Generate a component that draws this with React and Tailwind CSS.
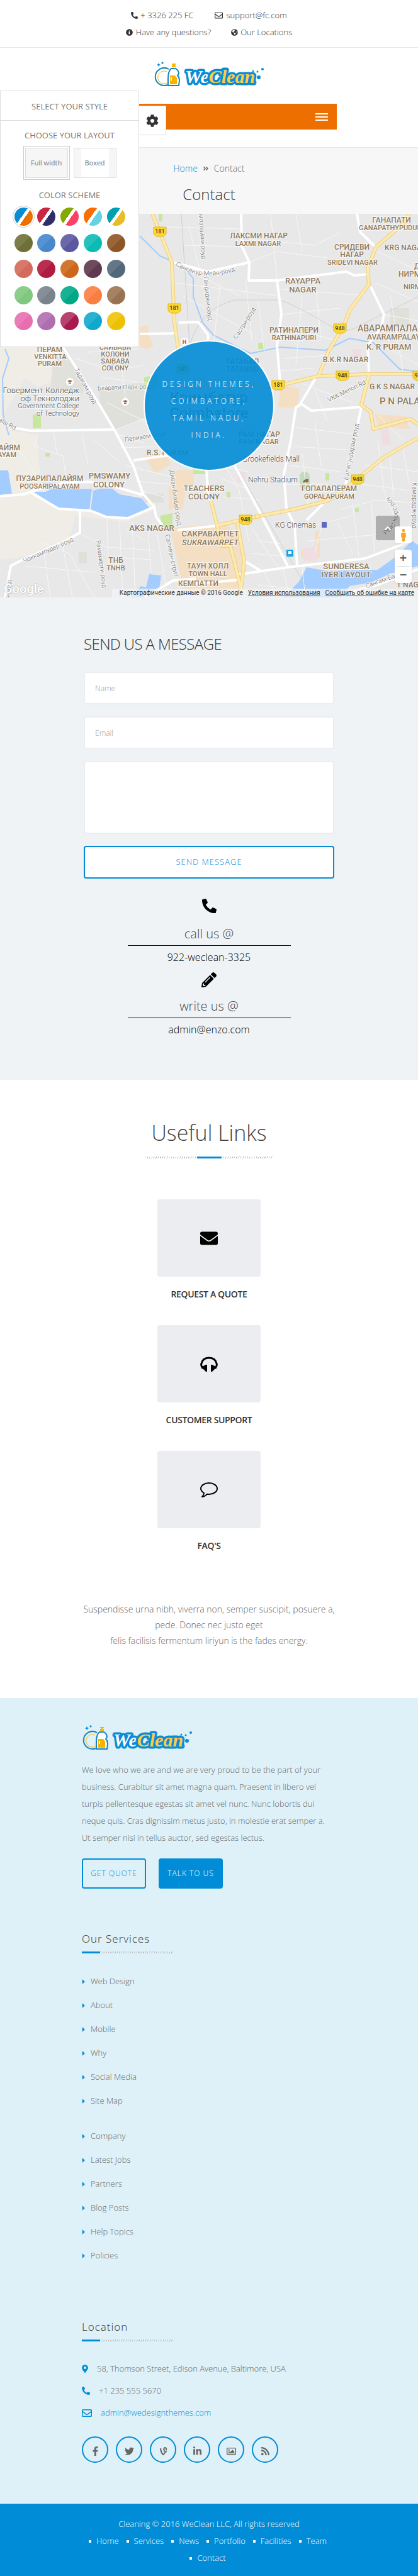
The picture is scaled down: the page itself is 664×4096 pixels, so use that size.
import React, { useState } from 'react';
import {
  FaPhone, FaEnvelope, FaCog, FaPencilAlt, FaGlobeAmericas, FaInfoCircle, FaMale,
  FaMapMarkerAlt, FaFacebookF, FaTwitter, FaVine, FaLinkedinIn, FaRegImage, FaRss,
  FaRegEnvelope, FaCaretRight, FaAngleDoubleRight, FaChevronUp,
} from 'react-icons/fa';

const SCHEMES = [
  ['#0a8cd6', '#ec6f00'], ['#cb2742', '#302e66'], ['#86a800', '#fd4166'], ['#fb6d00', '#68d2e4'], ['#00a0b0', '#eabb28'],
  ['#7d7d49', '#6f7038'], ['#5594d2', '#4888ca'], ['#6a67ab', '#5b58a1'], ['#25c2bd', '#0dbbb5'], ['#9a6637', '#8d5626'],
  ['#d9776a', '#d46a5c'], ['#b92e50', '#b01b41'], ['#d17730', '#cb661b'], ['#6e4a5e', '#603a50'], ['#637788', '#526879'],
  ['#8dcd8c', '#80c77f'], ['#868f97', '#79838b'], ['#19b193', '#00a886'], ['#fb8b52', '#f97e41'], ['#a48262', '#997351'],
  ['#e97db7', '#e76fb0'], ['#b87db9', '#af6eb0'], ['#b84371', '#a8194f'], ['#27b2d2', '#10a9cd'], ['#f1c91c', '#edc102'],
];

// x, y, text, size, anchor
const AREAS = [
  [411, 35, 'ЛАКСМИ НАГАР', 12], [410, 47, 'LAXMI NAGAR', 11],
  [622, 10, 'ГАНАПАТИ', 12], [570, 22, 'GANAPATHYPUDUR', 11, 'start'],
  [559, 53, 'СРИДЕВИ', 12], [559, 65, 'НАГАР', 12], [560, 77, 'SRIDEVI NAGAR', 11],
  [611, 54, 'KRG NAGAR', 12, 'start'], [481, 106, 'RAYAPPA', 13], [481, 120, 'NAGAR', 13],
  [658, 83, 'ДИВЯ', 12, 'start'], [633, 96, 'НИРМАЛ', 12, 'start'], [641, 116, 'NIRMAL', 11, 'start'],
  [467, 185, 'РАТИНАПЕРИ', 12], [467, 197, 'RATHINAPURI', 11],
  [568, 182, 'АВАРАМПАЛАЯМ', 14, 'start'], [583, 196, 'AVARAMPALAYAM', 12, 'start'],
  [582, 211, 'K. R PURAM', 13, 'start'], [549, 232, 'B.K.R NAGAR', 12], [623, 275, 'G K S NAGAR', 12],
  [603, 298, 'P N PALAYAM', 15, 'start'], [385, 235, 'ТАТАБАД', 12], [385, 247, 'TATABAD', 12],
  [332, 292, 'Коимбатур', 24], [332, 317, 'Coimbatore', 24],
  [79, 216, 'ПЕРАМ', 12], [80, 227, 'VENKITTA', 11], [79, 238, 'PURAM', 11],
  [183, 212, 'САИБАБА', 11], [183, 223, 'КОЛОНИ', 11], [183, 234, 'SAIBABA', 11], [183, 245, 'COLONY', 11],
  [32, 372, 'ПАЛАЙЯМ', 12, 'end'], [26, 383, 'PALAYAM', 11, 'end'],
  [266, 380, 'R.S. PURAM', 12], [412, 351, 'РАМ НАГАР', 12], [411, 362, 'RAM NAGAR', 11],
  [523, 437, 'ГОПАЛАПЕРАМ', 12], [523, 449, 'GOPALAPURAM', 11],
  [79, 421, 'ПУЗАРИПАЛАЙЯМ', 12], [79, 433, 'POOSARIPALAYAM', 11],
  [174, 416, 'PMSWAMY', 13], [173, 430, 'COLONY', 13],
  [324, 436, 'TEACHERS', 13], [324, 449, 'COLONY', 13], [241, 499, 'AKS NAGAR', 13],
  [334, 508, 'САКРАВАРПЕТ', 13], [184, 551, 'ТНБ', 12], [184, 563, 'TNHB', 11],
  [330, 560, 'ТАУН ХОЛЛ', 12], [330, 572, 'TOWN HALL', 11], [315, 588, 'КЕМПАТТИ', 12],
  [550, 560, 'SUNDERESA', 13], [550, 573, 'IYER LAYOUT', 13], [630, 590, 'T NAGAR', 12, 'start'],
];

const PLACES = [
  [126, 280, 'Говермент Колледж', 13, 'end'], [126, 293, 'оф Текнолоджи', 13, 'end'],
  [126, 305, 'Government College', 11, 'end'], [126, 317, 'of Technology', 11, 'end'],
  [476, 390, 'Brookefields Mall', 12, 'end'], [394, 423, 'Nehru Stadium', 12, 'start'],
  [437, 495, 'KG Cinemas', 12, 'start'],
];

// x, y, angle, text
const STREETS = [
  [319, -5, 86, 'ампалайям-роуд'], [327, 100, 84, 'Гандиджи-роуд'], [373, 198, -58, 'Састри-роуд'],
  [121, 246, 61, 'Тадагам-роуд'], [155, 277, -2, 'Бхарати-Парк-роуд'], [521, 296, -26, 'VKK Menon Rd'],
  [198, 359, -9, 'Периаом-роуд'], [273, 407, 82, 'Диван-Бхадер-роуд'], [266, 510, 78, 'Саливан-стрит'],
  [37, 552, -24, 'Чоккампудер-роуд'], [156, 519, 82, 'Рамамерти-роуд'], [-6, 324, 28, 'palai Rd'],
  [549, 423, -79, 'Баласундарам-роуд'], [658, 427, 90, 'Камарадж-роуд'], [581, 592, -20, 'Сангам-Багх'],
  [12, 612, -85, 'я-роуд'],
];

const SHIELDS = [
  [254, 28, '181'], [277, 150, '181'], [442, 272, '181'], [290, 247, '181'],
  [540, 182, '948'], [544, 257, '948'], [568, 422, '948'], [390, 486, '948'], [666, 257, '948'],
];

const ROADS = [
  'M383 0L384 51L396 77L395 106L440 106L550 92L563 98L584 96', 'M440 106L447 160L440 209L445 267',
  'M567 0L572 29L597 53', 'M589 116L610 160L606 180L584 209L586 251', 'M502 260L476 304L470 308L462 360L451 414L455 469L468 495L472 559',
  'M478 302L495 313L574 307L555 400L549 430', 'M100 212L159 305L182 344L212 401L227 445L245 466L248 482L258 495',
  'M25 341L50 345L180 343', 'M0 449L38 446L63 437L100 428L140 426L169 430L227 447',
  'M49 443L93 469L144 472L169 482L203 484L245 466', 'M127 472L127 507L100 522L30 553L17 560L8 610',
  'M328 408L330 440L334 456', 'M373 401L415 479L457 560', 'M375 574L457 562L580 548L654 520', 'M212 392L267 384',
  'M521 453L487 487', 'M230 610L275 583L311 580', 'M284 173L315 172L331 193L329 210', 'M222 191L277 190',
  'M275 77L330 92L396 77', 'M282 503L343 496', 'M311 588L380 582', 'M388 552L415 568', 'M560 600L600 590L664 565',
];

const LANES = [
  'M240 20L380 24M290 50L384 52M300 20L320 100L380 130M396 77L440 60L520 70M396 40L500 50L540 30M430 0L440 106M470 0L480 60',
  'M280 110L440 130M290 130L400 190M350 110L340 200M390 106L400 200M410 140L420 220M447 160L540 150M450 180L530 200M447 120L580 130',
  'M500 100L510 200M480 130L470 240M600 60L664 90M597 110L664 140M610 160L664 170M620 130L640 250M610 210L664 240M450 230L520 225',
  'M445 250L500 245M480 270L560 300M500 280L520 330M120 230L180 250L230 240M140 220L220 215M190 215L200 300M160 260L240 270M170 300L230 330',
  'M182 344L230 325M186 350L230 365M190 372L260 370M200 400L280 420M215 425L270 430M225 440L260 450M60 350L55 370L100 385L105 420M85 345L90 380M130 350L140 400M150 360L190 395',
  'M20 360L40 390L60 420M60 520L110 540L150 610M40 560L150 570M70 540L80 610M100 530L115 610M130 510L170 530L245 535M170 485L172 560M190 490L195 610M175 545L240 550',
  'M200 500L230 520M210 490L215 610M235 500L240 570M250 510L265 600M340 370L380 440L395 520M345 400L395 410M350 420L400 440M355 450L412 455M400 500L440 560M410 520L450 525M400 540L455 545',
  'M470 340L560 350M465 370L550 375M460 400L540 410M455 430L520 430M480 380L490 470M500 330L510 400M540 470L600 455L664 460M535 490L560 540M480 500L560 480M490 520L600 510M500 540L510 500',
  'M600 360L610 440L640 520M580 400L664 410M575 430L650 440M620 390L625 450M640 370L650 430M600 320L640 360M560 460L570 545M590 460L595 540M410 590L500 600M420 570L440 610M450 565L460 610M480 562L485 610',
];

const YELLOWS = [
  'M242 0L253 27L273 77L277 173L283 214L300 262L435 275L506 258L580 255L664 255',
  'M650 0L640 16L597 53L584 87L586 112L555 154L546 178L521 220L506 258', 'M586 257L574 304L589 315L593 342L652 326L664 335',
  'M664 356L610 387L555 432L521 456L466 470L409 481L343 496', 'M335 456L345 496L353 528L366 528L377 572L383 598', 'M377 491L388 552L383 598',
];

function CityMap() {
  return (
    <svg viewBox="0 0 664 610" preserveAspectRatio="xMidYMid slice" className="block h-[610px] w-full bg-[#e8e8e8] font-[Roboto,sans-serif]">
      <path d="M0 200H100L84 240L80 268L60 275L40 262L0 330Z" fill="#f0ede6" />
      <path d="M0 330L20 345L58 352L66 437L245 450L248 470L200 490L120 480L110 520L40 545L0 550Z" fill="#f0ede6" />
      <path d="M84 235L108 222L120 250L140 268L130 286H80Z" fill="#e1e1dc" />
      <path d="M158 278L228 268L232 325L184 343L158 300Z" fill="#e0e0da" />
      <path d="M125 538h13v18h-13zM226 445h34v14h-34zM620 150h30v30h-30z" fill="#e0e0da" />
      <g fill="#f4dfc4">
        <path d="M222 180l12-3 4 20 6 12-10 6-12-4zM272 408h36v26l-14 12-4 24h-22v-36l6-4zM228 384h36l8 14-26 16z" />
        <path d="M270 500l90-8 24 30 2 50-12 30h-82l-8-40zM500 505h8v42h-30v-12l22-4zM446 272l30 6-4 30h-30zM595 318l50 4 6 20-50-2z" />
      </g>
      <g fill="#c9e6a0">
        <path d="M52 319h13v22h-13zM229 260l20-4v20h-20zM254 480l20-4v24h-16zM410 205h10v10h-10zM307 400h20v14h-20zM360 442h6v10h-6zM72 380h7v6h-7zM252 0h6v12h-6zM517 412h6v12h-6zM564 468h6v6h-6z" />
        <rect x="476" y="410" width="16" height="28" rx="8" fill="#c5dbc0" />
      </g>
      <path d="M560 215h14v18h-14zM604 345l12-4 6 26-14 2zM378 410h12v16h-12zM482 532l22-4v24h-22z" fill="#efdde2" />
      <g fill="#a3ccff">
        <path d="M53 442L72 442L85 436L146 438L142 471L112 471L93 468Z" />
        <path d="M148 440L160 437L178 437L190 446L224 452L239 469L203 482L169 482L144 471Z" />
        <path d="M0 408L13 408L19 445L0 447Z" />
        <path d="M237 573L256 575L253 596L236 610H206L224 592L232 594Z" />
        <path d="M487 562L520 568L600 566L625 548L655 520L664 527V560L620 572L590 586L555 592L540 610H450L475 585Z" />
      </g>
      <path d="M222 35L254 67L292 83L307 103L307 132L322 173L339 193L398 222L445 212L517 217L555 198L593 205L635 247L664 251M8 215L14 230L4 262L5 320L14 352" fill="none" stroke="#a3ccff" strokeWidth="2" />
      <g fill="none" stroke="#f7f7f7" strokeWidth="1">{LANES.map((d) => <path key={d} d={d} />)}</g>
      <path d="M288 0L301 205M301 210Q318 150 373 137H445Q480 150 529 181Q550 192 575 176L664 132M373 398L496 610" fill="none" stroke="#cfcfcf" strokeWidth="1" />
      <g fill="none" stroke="#fff" strokeWidth="4" strokeLinejoin="round">{ROADS.map((d) => <path key={d} d={d} />)}</g>
      <g fill="none" stroke="#eccf80" strokeWidth="6" strokeLinejoin="round">{YELLOWS.map((d) => <path key={d} d={d} />)}</g>
      <g fill="none" stroke="#fdeaac" strokeWidth="4" strokeLinejoin="round">{YELLOWS.map((d) => <path key={d} d={d} />)}</g>
      <circle cx="409" cy="481" r="4" fill="#fdeaac" stroke="#eccf80" />

      <g dominantBaseline="central" stroke="#fff" strokeOpacity="0.7" strokeWidth="2" paintOrder="stroke">
        <g fill="#666" fontSize="10">
          {STREETS.map(([x, y, a, t]) => <text key={t} transform={`translate(${x} ${y}) rotate(${a})`}>{t}</text>)}
          <path id="sanganur" d="M281 78Q325 108 384 82" fill="none" stroke="none" />
          <path id="race" d="M610 508Q645 480 612 452" fill="none" stroke="none" />
          <text><textPath href="#sanganur">Санганур-Мейн-роуд</textPath></text>
          <text><textPath href="#race">Рейс-Корс-роуд</textPath></text>
        </g>
        <g fill="#8f7a5c" fontWeight="500">
          {AREAS.map(([x, y, t, s, a]) => <text key={t + y} x={x} y={y} fontSize={s} textAnchor={a || 'middle'}>{t}</text>)}
          <text x="334" y="522" fontSize="13" fontStyle="italic" textAnchor="middle">SUKRAWARPET</text>
        </g>
        <g fill="#444">
          {PLACES.map(([x, y, t, s, a]) => <text key={t} x={x} y={y} fontSize={s} textAnchor={a}>{t}</text>)}
        </g>
      </g>
      {SHIELDS.map(([x, y, t]) => (
        <g key={`${x}-${y}`}>
          <path d={`M${x - 10} ${y - 7}h20v11l-5 4h-10l-5-4z`} fill="#fdd835" stroke="#d9b424" />
          <text x={x} y={y} fontSize="9" fontWeight="500" fill="#4a3f1c" textAnchor="middle" dominantBaseline="central">{t}</text>
        </g>
      ))}
      <circle cx="293" cy="203" r="6" fill="#fff" />
      <text x="293" y="204" fontSize="9" fontWeight="700" fill="#d23b3b" textAnchor="middle" dominantBaseline="central">H</text>
      {[[111, 267], [199, 299]].map(([x, y]) => (
        <g key={x}>
          <circle cx={x} cy={y} r="6" fill="#fff" />
          <path d={`M${x - 4} ${y - 1}l4-2 4 2-4 2zM${x - 2} ${y + 1}l2 1 2-1v2h-4z`} fill="#8a6d4b" />
        </g>
      ))}
      <rect x="511" y="490" width="8" height="9" fill="#5c6bc0" />
      <path d="M481 426q4-6 9-4v5h-9z" fill="#8a6d4b" />
      <rect x="455" y="534" width="11" height="11" rx="1" fill="#10a4e8" />
      <path d="M458 536h5v5h-5zM458 542h1v1h-1zM462 542h1v1h-1z" fill="#fff" />
      <text x="6" y="603" fontSize="20" fontWeight="500" fill="#fff" stroke="#b5b5b5" strokeWidth="1" paintOrder="stroke">Google</text>
    </svg>
  );
}

function Logo() {
  return (
    <svg viewBox="0 0 176 40" className="h-10 w-44" role="img" aria-label="WeClean">
      <path d="M24 12A14 14 0 1 0 22 37" fill="none" stroke="#1583c0" strokeWidth="2" />
      <path d="M21 16A10 10 0 1 0 21 34" fill="none" stroke="#f7b500" strokeWidth="1" />
      <path d="M8 2l1 2 2 1-2 1-1 2-1-2-2-1 2-1zM14 0l1 1 1 1-1 1-1 1-1-1-1-1 1-1z" fill="#0a8cd6" />
      <path d="M29 3h6v2h-2v1h2v3h-6v-3h2v-1h-2z" fill="#f7b500" />
      <path d="M28 11h7q5 3 5 8l-2 3q3 3 3 8l-1 8h-17v-11q0-12 5-16z" fill="#fff" stroke="#1583c0" strokeWidth="2" />
      <path d="M26 22h8l3 4v10h-11z" fill="#f7b500" />
      <path d="M28 25v5" stroke="#fff" strokeWidth="2" />
      <g fontFamily="'Liberation Serif', serif" fontWeight="700" fontStyle="italic" fontSize="30" strokeLinejoin="round">
        <text x="50" y="34" stroke="#0a8cd6" strokeWidth="7" paintOrder="stroke" fill="#fff">We<tspan fill="#ffcc44">Clean</tspan></text>
      </g>
      <g fill="#0a8cd6">
        <circle cx="158" cy="15" r="1.5" /><circle cx="165" cy="16" r="1.5" /><circle cx="173" cy="12" r="2" /><circle cx="167" cy="25" r="3" />
      </g>
    </svg>
  );
}

function StylePanel() {
  const [scheme, setScheme] = useState(0);
  return (
    <aside className="absolute left-0 top-36 z-10 flex items-start text-[#777]">
      <div className="h-[408px] w-[221px] border border-[#ddd] bg-white text-center text-[13px] font-normal leading-5">
        <h4 className="border-b border-[#ddd] pb-3 pt-[14px] leading-5">SELECT YOUR STYLE</h4>
        <h4 className="mt-[13px]">CHOOSE YOUR LAYOUT</h4>
        <div className="mt-[7px] flex items-center justify-center gap-[6px] text-[11px] font-semibold tracking-tight text-[#999]">
          <button className="border border-[#ccc] p-[2px]"><span className="flex h-12 w-[68px] items-center justify-center border border-[#ddd] bg-[#f6f6f6]">Full width</span></button>
          <button className="flex h-12 w-[68px] border border-[#ddd] bg-[#f6f6f6] px-[11px]"><span className="flex flex-1 items-center justify-center self-stretch bg-white">Boxed</span></button>
        </div>
        <h4 className="mt-[14px]">COLOR SCHEME</h4>
        <div className="mx-auto mt-[10px] grid h-[195px] w-44 grid-cols-[repeat(5,29px)] content-between justify-between">
          {SCHEMES.map(([a, b], i) => (
            <button key={a} aria-label={`Color scheme ${i + 1}`} onClick={() => setScheme(i)}
              className={`h-[29px] w-[29px] rounded-full ${scheme === i ? 'outline outline-offset-2 outline-[#ccc]' : ''}`}
              style={{ background: i < 5 ? `linear-gradient(125deg, ${a} 44%, #fff 44%, #fff 56%, ${b} 56%)` : `linear-gradient(135deg, ${a} 50%, ${b} 50%)` }} />
          ))}
        </div>
      </div>
      <button aria-label="Settings" className="mt-6 flex h-[47px] w-[43px] items-center justify-center border border-l-0 border-[#ddd] bg-white text-[#333]"><FaCog size={20} /></button>
    </aside>
  );
}

const Headphones = () => (
  <svg viewBox="0 0 28 24" className="h-6 w-7">
    <path d="M3 17Q1 14 2 11Q4 2 14 2T26 11Q27 14 25 17" fill="none" stroke="#000" strokeWidth="3" />
    <path d="M11 13v11H9l-4-4-3-1v-3l3-1 4-2zM17 13v11h2l4-4 3-1v-3l-3-1-4-2z" />
  </svg>
);

const Comment = () => (
  <svg viewBox="0 0 30 26" className="h-[26px] w-[30px]" fill="none" stroke="#000" strokeWidth="2" strokeLinejoin="round">
    <path d="M15 2c7 0 13 4 13 9s-6 9-13 9c-1 0-2 0-3-.300C10 22 7 24 4 24c2-2 3-3 3-6C4 16 2 14 2 11c0-5 6-9 13-9z" />
  </svg>
);

const Hatch = ({ className }) => (
  <span className={`h-[3px] bg-[repeating-linear-gradient(120deg,#bbb_0px,#bbb_1px,transparent_1px,transparent_3px)] ${className}`} />
);

const FooterTitle = ({ children }) => (
  <>
    <h3 className="text-[17px] leading-6 tracking-[1px] text-[#333]">{children}</h3>
    <div className="mt-2 flex w-[145px]"><span className="h-[3px] w-[29px] bg-[#008cd6]" /><Hatch className="flex-1" /></div>
  </>
);

const FooterList = ({ items }) => (
  <ul>
    {items.map((t) => <li key={t} className="flex h-[38px] items-center gap-2"><FaCaretRight size={12} className="w-[6px] text-[#008cd6]" /><a href="#">{t}</a></li>)}
  </ul>
);

const TILES = [
  ['REQUEST A QUOTE', () => <FaEnvelope size={28} />], ['CUSTOMER SUPPORT', Headphones], ["FAQ'S", Comment],
];
const SOCIAL = [['Facebook', FaFacebookF], ['Twitter', FaTwitter], ['Vine', FaVine], ['LinkedIn', FaLinkedinIn], ['Gallery', FaRegImage], ['RSS', FaRss]];

export default function App() {
  return (
    <div className="relative bg-white font-['Open_Sans',sans-serif] text-[13px] font-light text-[#666]">
      <StylePanel />
      <div className="flex flex-col items-center border-b border-[#e8e8e8] pb-[10px] pt-[11px] leading-[27px] text-[#333]">
        <div className="flex gap-[34px]">
          <span className="flex items-center gap-1"><FaPhone size={11} className="-scale-x-100" />+ 3326 225 FC</span>
          <a href="#" className="flex items-center gap-[5px]"><FaRegEnvelope size={13} />support@fc.com</a>
        </div>
        <div className="flex gap-8">
          <a href="#" className="flex items-center gap-[5px]"><FaInfoCircle size={11} />Have any questions?</a>
          <a href="#" className="flex items-center gap-1"><FaGlobeAmericas size={11} />Our Locations</a>
        </div>
      </div>

      <header className="flex h-[159px] flex-col items-center border-b border-[#e8e8e8] pt-[22px]">
        <Logo />
        <nav className="mt-[27px] flex h-[41px] w-full max-w-[406px] items-center justify-end bg-[#ec6f00] pr-[14px]">
          <button aria-label="Menu" className="flex w-5 flex-col gap-[3px]">
            <span className="h-[2px] bg-white" /><span className="h-[2px] bg-white" /><span className="h-[2px] bg-white" />
          </button>
        </nav>
      </header>

      <section className="flex h-[105px] flex-col items-center bg-[#f7f7f7] pt-5">
        <div className="flex items-center gap-2 text-[14px] leading-[26px]"><a href="#" className="text-[#008cd6]">Home</a><FaAngleDoubleRight size={10} /><span>Contact</span></div>
        <h1 className="mt-3 text-[24px] leading-8 text-[#333]">Contact</h1>
      </section>

      <section className="relative">
        <CityMap />
        <div className="absolute inset-x-0 top-[201px] flex justify-center">
          <address className="flex h-[208px] w-[208px] flex-col items-center justify-center rounded-full border-2 border-white bg-[#008cd6]/90 pt-3 text-[12px] not-italic leading-[27px] tracking-[4px] text-white">
            <span>DESIGN THEMES,</span><span>COIMBATORE,</span><span>TAMIL NADU,</span><span>INDIA.</span>
          </address>
        </div>
        <button aria-label="Back to top" className="absolute bottom-[91px] right-[29px] flex h-[39px] w-[38px] items-center justify-center rounded-sm bg-black/25 text-white"><FaChevronUp size={12} /></button>
        <button aria-label="Street view" className="absolute bottom-[86px] right-[10px] flex h-[27px] w-[27px] items-center justify-center rounded-sm bg-white text-[#f5a623] shadow"><FaMale size={20} /></button>
        <div className="absolute bottom-[23px] right-[10px] flex h-[53px] w-[27px] flex-col items-center rounded-sm bg-white text-[20px] font-bold leading-[26px] text-[#666] shadow">
          <button aria-label="Zoom in">+</button><span className="h-px w-5 bg-[#ddd]" /><button aria-label="Zoom out">−</button>
        </div>
        <div className="absolute bottom-0 right-0 flex gap-2 bg-[#f5f5f5]/70 pl-3 pr-[6px] font-[Roboto,sans-serif] text-[10px] font-normal leading-[14px] text-[#333]">
          <span>Картографические данные © 2016 Google</span>
          <a href="#" className="underline">Условия использования</a>
          <a href="#" className="underline">Сообщить об ошибке на карте</a>
        </div>
      </section>

      <section className="h-[767px] bg-[#eff3f6] pt-[58px]">
        <form className="mx-auto flex w-[398px] flex-col" onSubmit={(e) => e.preventDefault()}>
          <h2 className="mb-7 text-[24px] leading-8 tracking-tight text-[#333]">SEND US A MESSAGE</h2>
          <input aria-label="Name" placeholder="Name" className="mb-[19px] h-[52px] rounded border-2 border-[#ecedf1] bg-white px-4 text-[12px] placeholder:text-[#999]" />
          <input aria-label="Email" placeholder="Email" className="mb-[19px] h-[52px] rounded border-2 border-[#ecedf1] bg-white px-4 text-[12px] placeholder:text-[#999]" />
          <textarea aria-label="Message" className="mb-[19px] h-[116px] resize-none rounded border-2 border-[#ecedf1] bg-white p-4 text-[12px]" />
          <button className="h-[52px] rounded border-2 border-[#008cd6] bg-white tracking-[1px] text-[#008cd6]">SEND MESSAGE</button>
        </form>
        <div className="mx-auto flex w-[259px] flex-col items-center text-[16px] text-black">
          <FaPhone size={23} className="mt-8 -scale-x-100" />
          <h4 className="mt-[18px] w-full border-b border-black pb-[3px] text-center text-[20px] leading-[30px] text-[#444]">call us @</h4>
          <p className="mt-[5px] leading-[26px]">922-weclean-3325</p>
          <FaPencilAlt size={24} className="mt-[11px]" />
          <h4 className="mt-[15px] w-full border-b border-black pb-[3px] text-center text-[20px] leading-[30px] text-[#444]">write us @</h4>
          <p className="mt-[5px] leading-[26px]">admin@enzo.com</p>
        </div>
      </section>

      <section className="flex h-[983px] flex-col items-center pt-[61px] text-center">
        <h2 className="text-[34px] leading-[46px] text-[#444]">Useful Links</h2>
        <div className="mt-[15px] flex w-[202px]"><Hatch className="flex-1" /><span className="h-[3px] w-[39px] bg-[#008cd6]" /><Hatch className="flex-1" /></div>
        <div className="mt-[65px] flex flex-col gap-[37px] text-[#333]">
          {TILES.map(([label, Icon]) => (
            <a key={label} href="#" className="flex flex-col items-center gap-4 text-[14px] font-semibold leading-6 tracking-tight">
              <span className="flex h-[123px] w-[164px] items-center justify-center rounded bg-[#ecedf1] text-black"><Icon /></span>
              {label}
            </a>
          ))}
        </div>
        <p className="mt-[76px] w-[404px] text-[14px] leading-[25px]">Suspendisse urna nibh, viverra non, semper suscipit, posuere a, pede. Donec nec justo eget<br />felis facilisis fermentum liriyun is the fades energy.</p>
      </section>

      <footer className="bg-[#def1f8]">
        <div className="mx-auto h-[1281px] w-[404px] pt-[43px]">
          <Logo />
          <p className="mt-[18px] w-[398px] leading-[27px]">We love who we are and we are very proud to be the part of your business. Curabitur sit amet magna quam. Praesent in libero vel turpis pellentesque egestas sit amet vel nunc. Nunc lobortis dui neque quis. Cras dignissim metus justo, in molestie erat semper a. Ut semper nisi in tellus auctor, sed egestas lectus.</p>
          <div className="mb-[68px] mt-[19px] flex gap-5 text-[12px] tracking-[1px]">
            <button className="h-12 w-[102px] rounded border-2 border-[#008cd6] text-[#008cd6]">GET QUOTE</button>
            <button className="h-12 w-[102px] rounded bg-[#008cd6] text-white">TALK TO US</button>
          </div>
          <FooterTitle>Our Services</FooterTitle>
          <div className="mb-[82px] mt-[26px] flex flex-col gap-[18px]">
            <FooterList items={['Web Design', 'About', 'Mobile', 'Why', 'Social Media', 'Site Map']} />
            <FooterList items={['Company', 'Latest Jobs', 'Partners', 'Blog Posts', 'Help Topics', 'Policies']} />
          </div>
          <FooterTitle>Location</FooterTitle>
          <ul className="mt-[26px] leading-[35px]">
            <li className="flex items-center gap-[14px]"><FaMapMarkerAlt size={13} className="w-[10px] text-[#008cd6]" />58, Thomson Street, Edison Avenue, Baltimore, USA</li>
            <li className="flex items-center gap-[14px]"><FaPhone size={13} className="-scale-x-100 text-[#008cd6]" />+1 235 555 5670</li>
            <li className="flex items-center gap-[14px] text-[#008cd6]"><FaRegEnvelope size={16} /><a href="#">admin@wedesignthemes.com</a></li>
          </ul>
          <div className="mt-5 flex gap-3">
            {SOCIAL.map(([name, Icon]) => <a key={name} href="#" aria-label={name} className="flex h-[42px] w-[42px] items-center justify-center rounded-full border-2 border-[#008cd6] pt-1"><Icon size={15} /></a>)}
          </div>
        </div>
        <div className="h-[115px] bg-[#008cd6] pt-[19px] text-center leading-[27px] text-white">
          <p>Cleaning © 2016 WeClean LLC, All rights reserved</p>
          <ul className="mx-auto flex w-[404px] flex-wrap justify-center gap-x-3 pr-1">
            {['Home', 'Services', 'News', 'Portfolio', 'Facilities', 'Team', 'Contact'].map((t) => (
              <li key={t} className="flex items-center gap-2"><span className="h-1 w-1 bg-white" /><a href="#">{t}</a></li>
            ))}
          </ul>
        </div>
      </footer>
    </div>
  );
}
